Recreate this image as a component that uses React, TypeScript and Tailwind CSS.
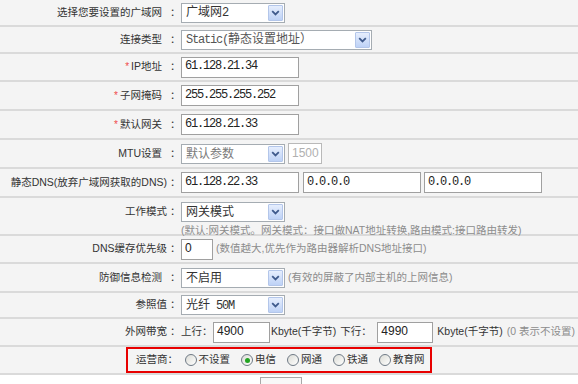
import type { ReactNode } from 'react';

function Mono({ children }: { children: ReactNode }) {
  return <span className="font-['Liberation_Mono',monospace] tracking-[-1.2px]">{children}</span>;
}

function Label({ text, star, spaced }: { text: ReactNode; star?: boolean; spaced?: boolean }) {
  return (
    <div className="flex h-[19px] w-[181px] shrink-0 items-center justify-end">
      {star && <span className="mr-[2px] text-[10px] leading-none text-[#f04a4a]">*</span>}
      <span className={spaced ? 'mr-[8px]' : 'mr-[3px]'}>{text}</span>
      <span className="w-[11px]">：</span>
    </div>
  );
}

function Arrow() {
  return (
    <div className="mr-[1px] flex h-[16px] w-[15px] shrink-0 items-center justify-center rounded-[1px] border border-[#b3c6ea] bg-gradient-to-b from-[#e6eefd] to-[#bed2f6]">
      <svg width="9" height="6" viewBox="0 0 9 6">
        <path d="M1.2 1.2 L4.5 4.4 L7.8 1.2" stroke="#3f5a8c" strokeWidth="1.8" fill="none" />
      </svg>
    </div>
  );
}

function Select({ w, children, tone }: { w: string; children: ReactNode; tone?: string }) {
  return (
    <div className={`flex h-[20px] shrink-0 items-center border border-[#a5acb2] bg-white pl-[4px] ${w}`}>
      <span className={`flex-1 text-[12px] leading-none ${tone ?? 'text-[#333]'}`}>{children}</span>
      <Arrow />
    </div>
  );
}

function Field({ w, children, sans, dim }: { w: string; children?: ReactNode; sans?: boolean; dim?: boolean }) {
  return (
    <div
      className={`flex h-[21px] shrink-0 items-center border bg-white pl-[3px] pb-[2px] text-[12px] leading-none ${w} ${
        dim ? 'border-[#b9b9b9] text-[#b0b0b0]' : 'border-[#a0a0a0] text-[#222]'
      } ${sans ? "font-['Liberation_Sans',sans-serif]" : "font-['Liberation_Mono',monospace] tracking-[-1.2px]"}`}
    >
      {children}
    </div>
  );
}

function Note({ children, className }: { children: ReactNode; className?: string }) {
  return <span className={`text-[#8c8c8c] ${className ?? ''}`}>{children}</span>;
}

function Radio({ checked, text }: { checked?: boolean; text: string }) {
  return (
    <div className="flex items-center">
      <span className="flex h-[12px] w-[12px] items-center justify-center rounded-full border border-[#6f7a86] bg-gradient-to-br from-[#dcdcd6] to-white">
        {checked && <span className="h-[5px] w-[5px] rounded-full bg-[#22a422]" />}
      </span>
      <span className="ml-[2px]">{text}</span>
    </div>
  );
}

export default function App() {
  const row = 'flex items-center border-b-2 border-[#dadada]';
  return (
    <div className="h-[384px] w-[578px] overflow-hidden whitespace-nowrap bg-[#f4f4f4] font-['Liberation_Sans','Noto_Sans_CJK_SC',sans-serif] text-[10.5px] text-[#333]">
      {/* WAN select */}
      <div className={`${row} h-[27px]`}>
        <Label text="选择您要设置的广域网" spaced />
        <Select w="w-[104px]">
          广域网<Mono>2</Mono>
        </Select>
      </div>

      <div className={`${row} h-[27px]`}>
        <Label text="连接类型" spaced />
        <Select w="w-[191px]" tone="text-[#555]">
          <Mono>Static(</Mono>静态设置地址）
        </Select>
      </div>

      <div className={`${row} h-[28px]`}>
        <Label text="IP地址" star spaced />
        <Field w="w-[118px]">61.128.21.34</Field>
      </div>

      <div className={`${row} h-[29px]`}>
        <Label text="子网掩码" star spaced />
        <Field w="w-[118px]">255.255.255.252</Field>
      </div>

      <div className={`${row} h-[29px]`}>
        <Label text="默认网关" star spaced />
        <Field w="w-[118px]">61.128.21.33</Field>
      </div>

      <div className={`${row} h-[29px]`}>
        <Label text="MTU设置" spaced />
        <Select w="w-[104px]" tone="text-[#7a7a7a]">
          默认参数
        </Select>
        <div className="ml-[3px]">
          <Field w="w-[34px]" sans dim>
            1500
          </Field>
        </div>
      </div>

      <div className={`${row} h-[29px]`}>
        <Label text="静态DNS(放弃广域网获取的DNS)" />
        <Field w="w-[118px]">61.128.22.33</Field>
        <div className="ml-[4px]">
          <Field w="w-[118px]">0.0.0.0</Field>
        </div>
        <div className="ml-[3px]">
          <Field w="w-[118px]">0.0.0.0</Field>
        </div>
      </div>

      {/* work mode, two lines */}
      <div className="flex h-[38px] items-start border-b-2 border-[#dadada] pt-[4px]">
        <Label text="工作模式" />
        <div className="flex flex-col">
          <Select w="w-[104px]">网关模式</Select>
          <Note className="mt-[1px]">(默认:网关模式。网关模式：接口做NAT地址转换,路由模式:接口路由转发)</Note>
        </div>
      </div>

      <div className={`${row} h-[28px]`}>
        <Label text="DNS缓存优先级" />
        <Field w="w-[32px]" sans>
          0
        </Field>
        <Note className="ml-[3px]">(数值越大,优先作为路由器解析DNS地址接口)</Note>
      </div>

      <div className={`${row} h-[29px]`}>
        <Label text="防御信息检测" spaced />
        <Select w="w-[104px]">不启用</Select>
        <Note className="ml-[3px]">(有效的屏蔽了内部主机的上网信息)</Note>
      </div>

      <div className={`${row} h-[26px]`}>
        <Label text="参照值" />
        <Select w="w-[104px]">
          光纤<Mono> 50M</Mono>
        </Select>
      </div>

      <div className={`${row} h-[28px]`}>
        <Label text="外网带宽" />
        <span>上行</span>
        <span className="w-[11px] shrink-0">：</span>
        <Field w="w-[57px]" sans>
          4900
        </Field>
        <span className="ml-[1px]">Kbyte(千字节)</span>
        <span className="ml-[4px]">下行</span>
        <span className="w-[11px] shrink-0">：</span>
        <div className="ml-[5px]">
          <Field w="w-[56px]" sans>
            4990
          </Field>
        </div>
        <span className="ml-[4px]">Kbyte(千字节)</span>
        <Note className="ml-[4px]">(0 表示不设置)</Note>
      </div>

      {/* ISP radios */}
      <div className={`${row} h-[28px] pl-[126px]`}>
        <div className="flex h-[26px] w-[306px] shrink-0 items-center border-2 border-[#e80000]">
          <span className="ml-[8px]">运营商</span>
          <span className="w-[11px] shrink-0">：</span>
          <div className="ml-[6px] flex items-center gap-[11px]">
            <Radio text="不设置" />
            <Radio text="电信" checked />
            <Radio text="网通" />
            <Radio text="铁通" />
            <Radio text="教育网" />
          </div>
        </div>
      </div>

      <div className="h-[20px] bg-white pt-[2px]">
        <div className="ml-[260px] h-[20px] w-[42px] border border-[#a8a8a8] bg-[#f8f8f8]" />
      </div>
    </div>
  );
}
